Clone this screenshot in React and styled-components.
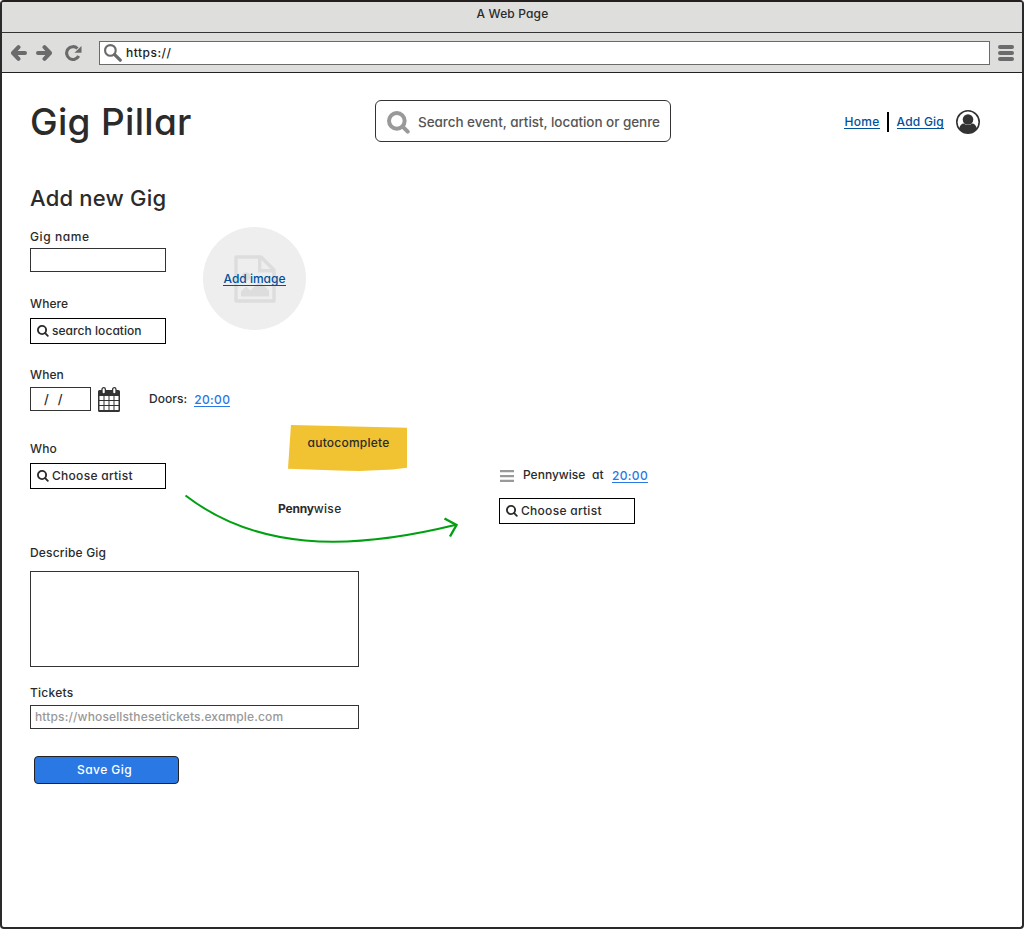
import React from "react";
import styled, { createGlobalStyle } from "styled-components";

const GlobalStyle = createGlobalStyle`
  * { box-sizing: border-box; }
  body {
    margin: 0;
    background: #fff;
    color: #2b2b2b;
    font: 450 12px/16px Inter, "Liberation Sans", sans-serif;
    font-feature-settings: "cv11";
  }
  svg { display: block; flex: none; }
`;

const Text = styled.span`
  font-size: ${(p) => p.$size || 12}px;
  font-weight: ${(p) => p.$weight || 450};
  letter-spacing: ${(p) => p.$track || 0}px;
  color: ${(p) => p.$color || "inherit"};
  white-space: nowrap;
`;

/* Browser frame */
const Window = styled.div`
  display: flex;
  flex-direction: column;
  width: 1024px;
  height: 929px;
  border: 2px solid #2b2a2a;
  border-top-color: #231f1f;
  border-radius: 4px;
  overflow: hidden;
  background: #fff;
`;

const TitleBar = styled.div`
  display: flex;
  justify-content: center;
  height: 31px;
  padding: 4px 0 0 1px;
  background: #dededc;
  border-bottom: 1px solid #333;
`;

const Toolbar = styled.div`
  display: flex;
  align-items: center;
  height: 40px;
  padding: 0 8px 0 9px;
  background: #dededc;
  border-bottom: 1px solid #222;
`;

const NavButtons = styled.div`
  display: grid;
  grid-template-columns: 25px 29px 34px;
  color: #6b6b6b;
`;

const UrlBar = styled.div`
  display: flex;
  align-items: center;
  flex: 1;
  gap: 4px;
  height: 24px;
  margin-right: 8px;
  padding-left: 4px;
  background: #fff;
  border: 1px solid #6b6b6b;
  color: #6b6b6b;
`;

/* Site header */
const Header = styled.header`
  display: flex;
  align-items: center;
  height: 42px;
  margin-top: 27px;
  padding: 0 42px 0 28px;
`;

const Logo = styled.h1`
  width: 345px;
  margin: 6px 0 0;
  line-height: 42px;
  font-weight: 400;
`;

const SearchBox = styled.div`
  display: flex;
  align-items: center;
  gap: 8px;
  width: 296px;
  height: 42px;
  padding: 2px 0 0 11px;
  border: 1px solid #333;
  border-radius: 6px;
  color: #999;
`;

const Nav = styled.nav`
  display: flex;
  align-items: center;
  margin-left: auto;
`;

const Link = styled.a`
  display: inline-block;
  height: 15px;
  line-height: 15px;
  border-bottom: 1px solid currentColor;
  color: ${(p) => (p.$bright ? "#2a78e4" : "#02509a")};
  white-space: nowrap;
`;

const Divider = styled.span`
  width: 2px;
  height: 20px;
  margin: 2px 8px 0 7px;
  background: #000;
`;

const Avatar = styled.span`
  margin: 2px 0 0 12px;
`;

/* Form */
const Form = styled.main`
  display: flex;
  flex-direction: column;
  align-items: flex-start;
  padding: 41px 28px 0;
`;

const Heading = styled.h2`
  margin: 0;
  line-height: 30px;
  font-weight: 400;
`;

const TopRow = styled.div`
  display: flex;
  gap: 37px;
  margin-top: 12px;
`;

const Stack = styled.div`
  display: flex;
  flex-direction: column;
  gap: 24px;
`;

const Field = styled.div`
  display: flex;
  flex-direction: column;
  gap: ${(p) => p.$gap ?? 4}px;
  margin-top: ${(p) => p.$top || 0}px;
`;

const Input = styled.div`
  display: flex;
  align-items: center;
  width: ${(p) => p.$width || 136}px;
  height: ${(p) => p.$height || 24}px;
  padding-left: ${(p) => p.$indent ?? 4}px;
  border: 1px solid #333;
`;

const Picker = styled(Input)`
  gap: 3px;
  height: 26px;
  padding-left: 6px;
  border-color: #000;
`;

const DateParts = styled.span`
  display: flex;
  gap: 9px;
  font-size: 13px;
`;

const ImageUpload = styled.div`
  position: relative;
  display: flex;
  align-items: center;
  justify-content: center;
  width: 103px;
  height: 103px;
  border-radius: 50%;
  background: #eee;
  color: #ddd;
`;

const UploadLabel = styled.div`
  position: absolute;
  inset: 44px 0 auto;
  display: flex;
  justify-content: center;
`;

const DateRow = styled.div`
  display: flex;
  align-items: center;
  gap: 7px;
  height: 24px;
`;

const Doors = styled.div`
  display: flex;
  align-items: center;
  gap: 7px;
  margin-left: 22px;
`;

const ArtistRow = styled.div`
  position: relative;
  display: flex;
  height: 120px;
  margin-top: 14px;
`;

const Hint = styled.div`
  display: flex;
  flex-direction: column;
  width: 211px;
  margin-left: 122px;
`;

const Note = styled.div`
  width: 119px;
  height: 46px;
  padding: 10px 0 0 2px;
  text-align: center;
  background: #f1c232;
  clip-path: polygon(2.5% 0, 100% 6%, 100% 93%, 88% 97%, 60% 100%, 42% 99%, 0 95%);
`;

const Suggestion = styled.div`
  margin: 30px 0 0 -10px;
`;

const Lineup = styled.div`
  display: flex;
  flex-direction: column;
  gap: 15px;
  padding-top: 42px;
`;

const LineupItem = styled.div`
  display: grid;
  grid-template-columns: 23px 69px 20px auto;
  align-items: center;
  padding-left: 1px;
`;

const DragHandle = styled.span`
  padding-top: 2px;
`;

const ArrowLayer = styled.div`
  position: absolute;
  left: 150px;
  top: 61px;
  pointer-events: none;
`;

const SaveButton = styled.button`
  width: 145px;
  height: 28px;
  margin: 27px 0 0 4px;
  padding: 0 4px 0 0;
  border: 1px solid #222;
  border-radius: 4px;
  background: #2a78e4;
  color: #fff;
  font: inherit;
  font-feature-settings: inherit;
`;

const ArrowIcon = ({ flip }) => (
  <svg width="16" height="16" viewBox="0 0 16 16" fill="none" stroke="currentColor" strokeWidth="4" strokeLinecap="round" strokeLinejoin="round">
    {flip ? <path d="M2 8h11.500M8.500 2.200l5.500 5.800-5.500 5.800" /> : <path d="M14 8H2.500M7.500 2.200L2 8l5.500 5.800" />}
  </svg>
);

const ReloadIcon = () => (
  <svg width="17" height="16" viewBox="0 0 17 16">
    <path d="M13.700 11A6.400 6.400 0 1 1 12.500 3.500" fill="none" stroke="currentColor" strokeWidth="3.100" />
    <path d="M16.500 1v6.700H9.500z" fill="currentColor" />
  </svg>
);

const SearchIcon = ({ size, stroke, lens = 7.5, handle = stroke }) => (
  <svg width={size} height={size} viewBox="0 0 22 22" fill="none" stroke="currentColor">
    <circle cx={lens + stroke / 2} cy={lens + stroke / 2} r={lens} strokeWidth={stroke} />
    <path d={`M${lens * 2} ${lens * 2}L19.800 19.800`} strokeWidth={handle} strokeLinecap="round" />
  </svg>
);

const MenuIcon = () => (
  <svg width="16" height="16" viewBox="0 0 16 16" stroke="#6b6b6b" strokeWidth="4" strokeLinecap="round">
    <path d="M2 2h12M2 8h12M2 14h12" />
  </svg>
);

const UserIcon = () => (
  <svg width="24" height="24" viewBox="0 0 24 24">
    <circle cx="12" cy="12" r="11.200" fill="#fff" stroke="#333" strokeWidth="1.600" />
    <path d="M3.200 19c.4-3.500 2.200-5.500 5-5.500 1 1 2.300 1.600 3.800 1.600s2.800-.6 3.800-1.600c2.800 0 4.600 2 5 5.500A11.300 11.300 0 0 1 3.200 19z" fill="#333" />
    <circle cx="12" cy="9.500" r="5.300" fill="#333" />
  </svg>
);

const FileImageIcon = () => (
  <svg width="42" height="48" viewBox="0 0 42 48">
    <path d="M2 2h25l13 13v31H2z" fill="none" stroke="currentColor" strokeWidth="3.400" strokeLinejoin="round" />
    <path d="M25.700 1.500v14.300H40" fill="none" stroke="currentColor" strokeWidth="3.400" />
    <circle cx="12" cy="21.500" r="4.300" fill="currentColor" />
    <path d="M7 41.500v-5l5-5 4.500 4 9-9 9.500 9v6z" fill="currentColor" />
  </svg>
);

const CalendarIcon = () => (
  <svg width="22" height="25" viewBox="0 0 22 25">
    <path d="M1.500 3h19A1.500 1.500 0 0 1 22 4.500v19a1.500 1.500 0 0 1-1.500 1.500h-19A1.500 1.500 0 0 1 0 23.500v-19A1.500 1.500 0 0 1 1.500 3z" fill="#333" />
    <g fill="#fff">
      {[9, 14, 19].map((y) => [1.5, 6.5, 11.5, 16.5].map((x) => <rect key={`${x}-${y}`} x={x} y={y} width="4" height="4" />))}
    </g>
    <g fill="#fff" stroke="#333" strokeWidth="1.300">
      <rect x="4" y=".7" width="3.400" height="6.300" rx="1.700" />
      <rect x="14.600" y=".7" width="3.400" height="6.300" rx="1.700" />
    </g>
  </svg>
);

const DragIcon = () => (
  <svg width="14" height="12" viewBox="0 0 14 12" fill="#999">
    <path d="M0 0h14v2.300H0zM0 4.900h14v2.300H0zM0 9.700h14V12H0z" />
  </svg>
);

const ArtistPicker = ({ children, track }) => (
  <Picker>
    <SearchIcon size={12} stroke={3.4} />
    <Text $track={track}>{children}</Text>
  </Picker>
);

export default function App() {
  return (
    <>
      <GlobalStyle />
      <Window>
        <TitleBar><Text $track={0.15}>A Web Page</Text></TitleBar>
        <Toolbar>
          <NavButtons>
            <ArrowIcon />
            <ArrowIcon flip />
            <ReloadIcon />
          </NavButtons>
          <UrlBar>
            <SearchIcon size={18} stroke={2.6} lens={6.5} handle={4} />
            <Text $track={0.5} $color="#222">https://</Text>
          </UrlBar>
          <MenuIcon />
        </Toolbar>

        <Header>
          <Logo><Text $size={37} $weight={500} $track={0.3}>Gig Pillar</Text></Logo>
          <SearchBox>
            <SearchIcon size={23} stroke={3.8} />
            <Text $size={13.5} $track={-0.05} $color="#555">Search event, artist, location or genre</Text>
          </SearchBox>
          <Nav>
            <Link><Text $track={0.3}>Home</Text></Link>
            <Divider />
            <Link><Text $track={0.22}>Add Gig</Text></Link>
            <Avatar><UserIcon /></Avatar>
          </Nav>
        </Header>

        <Form>
          <Heading><Text $size={22} $weight={500} $track={0.2}>Add new Gig</Text></Heading>
          <TopRow>
            <Stack>
              <Field $top={2} $gap={3}>
                <Text $track={0.6}>Gig name</Text>
                <Input />
              </Field>
              <Field $gap={6}>
                <Text $track={0.1}>Where</Text>
                <ArtistPicker track={0.05}>search location</ArtistPicker>
              </Field>
            </Stack>
            <ImageUpload>
              <FileImageIcon />
              <UploadLabel><Link><Text>Add image</Text></Link></UploadLabel>
            </ImageUpload>
          </TopRow>

          <Field $top={23}>
            <Text $track={0.1}>When</Text>
            <DateRow>
              <Input $width={61} $indent={13}>
                <DateParts><span>/</span><span>/</span></DateParts>
              </Input>
              <CalendarIcon />
              <Doors>
                <Text $track={0.05}>Doors:</Text>
                <Link $bright><Text $track={0.35}>20:00</Text></Link>
              </Doors>
            </DateRow>
          </Field>

          <ArtistRow>
            <Field $top={16} $gap={6}>
              <Text $track={0.1}>Who</Text>
              <ArtistPicker track={0.28}>Choose artist</ArtistPicker>
            </Field>
            <Hint>
              <Note><Text $track={0.22}>autocomplete</Text></Note>
              <Suggestion>
                <Text $weight={700} $track={-0.2}>Penny</Text>
                <Text $track={0.3}>wise</Text>
              </Suggestion>
            </Hint>
            <Lineup>
              <LineupItem>
                <DragHandle><DragIcon /></DragHandle>
                <Text>Pennywise</Text>
                <Text $track={0.2}>at</Text>
                <Link $bright><Text $track={0.35}>20:00</Text></Link>
              </LineupItem>
              <ArtistPicker track={0.28}>Choose artist</ArtistPicker>
            </Lineup>
            <ArrowLayer>
              <svg width="280" height="60" viewBox="0 0 280 60" fill="none" stroke="#00a010" strokeWidth="2">
                <path d="M5.500 9.500C75 63 165 66 275 39" />
                <path d="M264.500 32.500L276.500 39 270 50.500" strokeWidth="2.400" />
              </svg>
            </ArrowLayer>
          </ArtistRow>

          <Field $gap={10}>
            <Text $track={0.18}>Describe Gig</Text>
            <Input $width={329} $height={96} />
          </Field>
          <Field $top={18}>
            <Text $track={0.25}>Tickets</Text>
            <Input $width={329}>
              <Text $track={0.14} $color="#999">https://whosellsthesetickets.example.com</Text>
            </Input>
          </Field>
          <SaveButton><Text $track={0.45}>Save Gig</Text></SaveButton>
        </Form>
      </Window>
    </>
  );
}
